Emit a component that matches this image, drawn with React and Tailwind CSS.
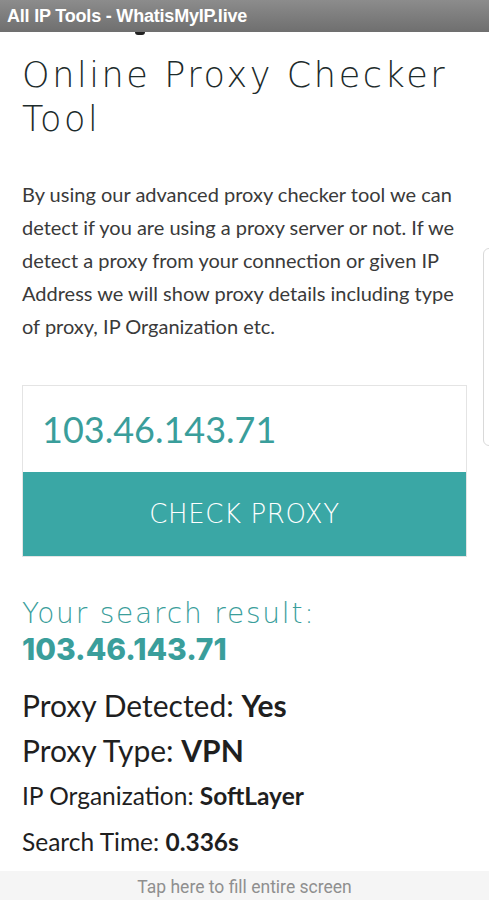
import React from 'react';

const teal = 'text-[#3a9e9b]';

function App() {
  return (
    <div className="relative w-[489px] h-[900px] overflow-hidden bg-white font-['Lato',sans-serif]">
      {/* top app bar */}
      <div className="h-[32px] bg-gradient-to-b from-[#8c8c8c] to-[#6f6f6f] flex items-center pl-[7px]">
        <span className="text-white font-bold text-[18px] tracking-[-0.2px] font-['Liberation_Sans',sans-serif]">
          All IP Tools - WhatisMyIP.live
        </span>
      </div>

      <div className="px-[22px]">
        <div className="h-[3px] w-[10px] ml-[113px] bg-[#222] rounded-b-full" />
        <h1 className="mt-[18px] text-[35px] leading-[44px] font-extralight text-[#1d2b2b] tracking-[2.6px] font-['DejaVu_Sans',sans-serif]">
          Online Proxy Checker<br />
          Tool
        </h1>

        <p className="mt-[37px] text-[20px] leading-[33px] text-[#3a3a3a]">
          By using our advanced proxy checker tool we can<br />
          detect if you are using a proxy server or not. If we<br />
          detect a proxy from your connection or given IP<br />
          Address we will show proxy details including type<br />
          of proxy, IP Organization etc.
        </p>

        <div className="mt-[42px] border border-[#e4e4e4]">
          <div className="h-[86px] flex items-center pl-[19px]">
            <span className={`text-[36px] ${teal}`}>103.46.143.71</span>
          </div>
          <div className="h-[84px] bg-[#3aa7a5] flex items-center justify-center">
            <span className="text-white text-[26px] font-extralight tracking-[0.6px] font-['DejaVu_Sans',sans-serif]">
              CHECK PROXY
            </span>
          </div>
        </div>

        <div className="mt-[40px]">
          <div className={`text-[28px] leading-[34px] font-extralight tracking-[1.8px] font-['DejaVu_Sans',sans-serif] ${teal}`}>
            Your search result:
          </div>
          <div className={`text-[30px] leading-[36px] font-extrabold font-['Inter',sans-serif] ${teal}`}>
            103.46.143.71
          </div>
        </div>

        <div className="mt-[16px] text-[#1f1f1f] flex flex-col">
          <div className="text-[30px] leading-[45px]">
            Proxy Detected: <span className="font-bold">Yes</span>
          </div>
          <div className="text-[30px] leading-[45px]">
            Proxy Type: <span className="font-bold">VPN</span>
          </div>
          <div className="text-[24.5px] leading-[46px]">
            IP Organization: <span className="font-bold">SoftLayer</span>
          </div>
          <div className="text-[24.5px] leading-[46px]">
            Search Time: <span className="font-bold">0.336s</span>
          </div>
        </div>
      </div>

      {/* side edge panel handle */}
      <div className="absolute right-[-6px] top-[248px] w-[12px] h-[198px] rounded-l-[6px] border border-[#d9d9d9] bg-white" />

      {/* bottom hint */}
      <div className="absolute bottom-0 left-0 right-0 h-[29px] bg-[#f5f5f5] flex items-start justify-center">
        <span className="text-[17.5px] leading-[26px] pt-[3px] text-[#8f8f8f] font-['Roboto',sans-serif]">Tap here to fill entire screen</span>
      </div>
    </div>
  );
}

export default App;
